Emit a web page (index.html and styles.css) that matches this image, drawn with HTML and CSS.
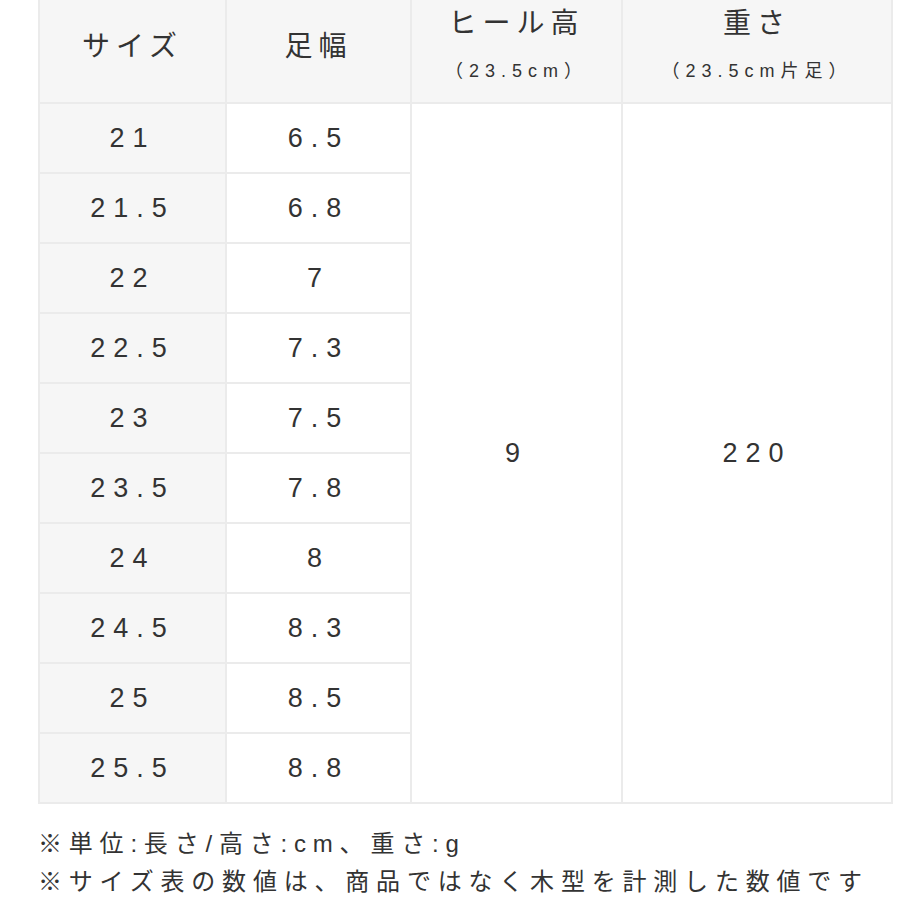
FILE: index.html
```html
<!DOCTYPE html>
<html lang="ja">
<head>
<meta charset="utf-8">
<link rel="stylesheet" href="styles.css">
</head>
<body>
<div class="wrap">
  <table class="size-table">
    <colgroup>
      <col class="c1"><col class="c2"><col class="c3"><col class="c4">
    </colgroup>
    <thead>
      <tr>
        <th class="h-one">サイズ</th>
        <th class="h-one">足幅</th>
        <th class="h-two"><span class="h-main">ヒール高</span><span class="h-sub">（23.5cm）</span></th>
        <th class="h-two"><span class="h-main">重さ</span><span class="h-sub">（23.5cm片足）</span></th>
      </tr>
    </thead>
    <tbody>
      <tr><td class="size">21</td><td>6.5</td><td class="big" rowspan="10">9</td><td class="big" rowspan="10">220</td></tr>
      <tr><td class="size">21.5</td><td>6.8</td></tr>
      <tr><td class="size">22</td><td>7</td></tr>
      <tr><td class="size">22.5</td><td>7.3</td></tr>
      <tr><td class="size">23</td><td>7.5</td></tr>
      <tr><td class="size">23.5</td><td>7.8</td></tr>
      <tr><td class="size">24</td><td>8</td></tr>
      <tr><td class="size">24.5</td><td>8.3</td></tr>
      <tr><td class="size">25</td><td>8.5</td></tr>
      <tr><td class="size">25.5</td><td>8.8</td></tr>
    </tbody>
  </table>
  <div class="notes">
    <p>※単位:長さ/高さ:cm、重さ:g</p>
    <p>※サイズ表の数値は、商品ではなく木型を計測した数値です</p>
  </div>
</div>
</body>
</html>
```
FILE: styles.css
```css
html, body {
  margin: 0;
  padding: 0;
  background: #ffffff;
}
body {
  font-family: "Liberation Sans", "Noto Sans CJK JP", sans-serif;
  color: #333333;
}
.wrap {
  padding-left: 38px;
  width: 853px;
}
.size-table {
  width: 853px;
  table-layout: fixed;
  border-collapse: collapse;
}
.c1 { width: 187px; }
.c2 { width: 185px; }
.c3 { width: 211px; }
.c4 { width: 270px; }
.size-table th,
.size-table td {
  border: 2px solid #ebebeb;
  text-align: center;
  vertical-align: middle;
  padding: 0;
}
.size-table th {
  border-top: none;
  background: #f6f6f6;
  height: 88px;
  padding-bottom: 14px;
  font-weight: normal;
}
.h-one {
  font-size: 28px;
  letter-spacing: 6px;
}
.h-main {
  display: block;
  font-size: 28px;
  letter-spacing: 6px;
  line-height: 34px;
  margin-top: 0;
}
.h-sub {
  display: block;
  font-size: 18px;
  letter-spacing: 6px;
  line-height: 22px;
  margin-top: 19px;
}
.size-table td {
  height: 68px;
  font-size: 27px;
  letter-spacing: 8px;
  padding-left: 0;
  background: #ffffff;
}
.size-table td.size {
  background: #f6f6f6;
}
.notes {
  margin-top: 21px;
}
.notes p {
  margin: 0;
  font-size: 24px;
  line-height: 38px;
  letter-spacing: 6.8px;
  white-space: nowrap;
}
```
